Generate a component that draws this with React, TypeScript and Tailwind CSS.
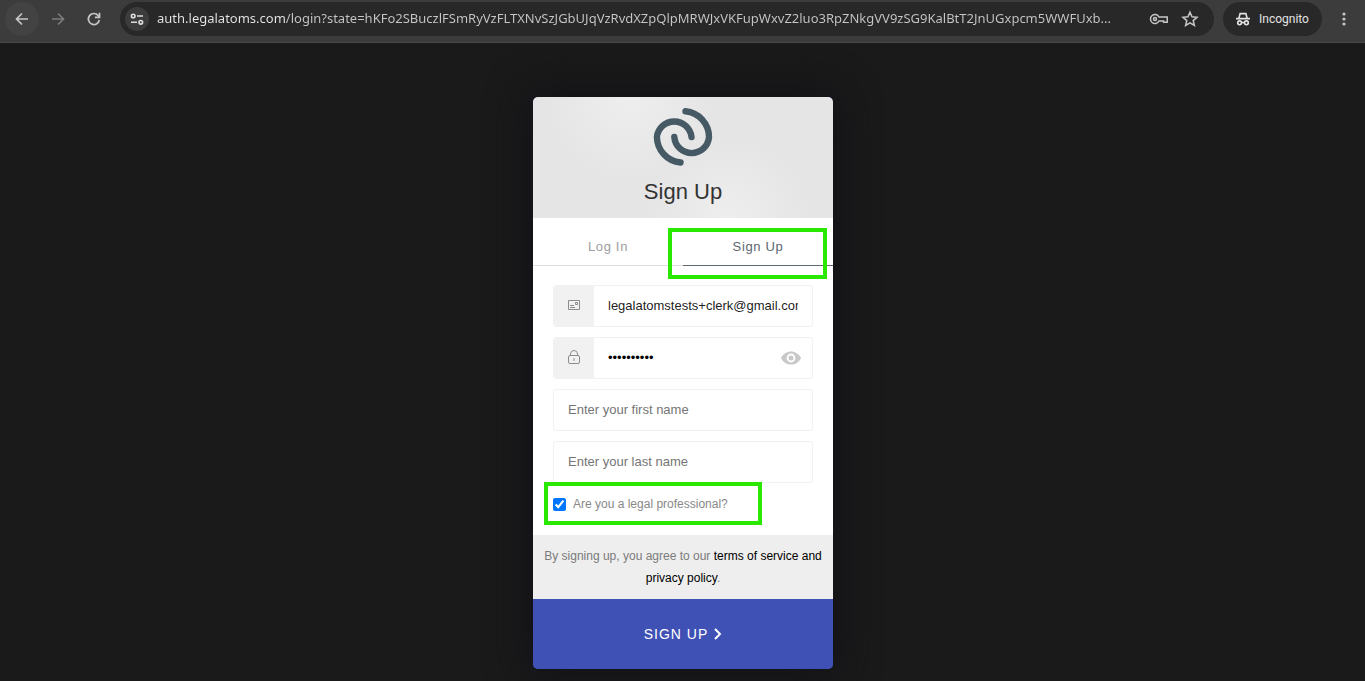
import React from 'react';

const ADDRESS =
  'auth.legalatoms.com/login?state=hKFo2SBuczlFSmRyVzFLTXNvSzJGbUJqVzRvdXZpQlpMRWJxVKFupWxvZ2luo3RpZNkgVV9zSG9KalBtT2JnUGxpcm5WWFUxb...';

/**
 * Browser toolbar with navigation, address field and incognito badge
 */
const BrowserBar: React.FC = () => {
  return (
    <header className="flex h-[43px] items-start border-b border-[#474847] bg-[#3c3c3c] pl-[5px] text-[#c7c7c7]">
      <nav className="flex h-[38px] shrink-0 items-center gap-0.5">
        <button type="button" aria-label="Back" className="flex size-[34px] items-center justify-center rounded-full bg-[#434343]">
          <svg width="16" height="16" viewBox="0 0 16 16" fill="none" stroke="currentColor" strokeWidth="1.7">
            <path d="M14 8H3M8 2.5 2.5 8 8 13.5" />
          </svg>
        </button>
        <button type="button" aria-label="Forward" className="flex size-[34px] items-center justify-center rounded-full text-[#7b7b7b]">
          <svg width="16" height="16" viewBox="0 0 16 16" fill="none" stroke="currentColor" strokeWidth="1.7">
            <path d="M2 8h11M8 2.5 13.5 8 8 13.5" />
          </svg>
        </button>
        <button type="button" aria-label="Reload" className="flex size-[34px] items-center justify-center rounded-full">
          <svg width="16" height="16" viewBox="0 0 16 16" fill="none" stroke="currentColor" strokeWidth="1.7">
            <path d="M13.3 9A5.5 5.5 0 1 1 12.2 4.6L13.4 6" />
            <path d="M13.5 1.8v4.6H8.9" />
          </svg>
        </button>
      </nav>

      <div className="mt-0.5 ml-[9px] flex h-[34px] min-w-0 flex-1 items-center rounded-full bg-[#282828] pr-[15px] pl-[5px]">
        <button type="button" aria-label="Site information" className="flex size-6 shrink-0 items-center justify-center rounded-full bg-[#3c3c3c] text-[#dedede]">
          <svg width="14" height="14" viewBox="0 0 14 14" fill="none" stroke="currentColor" strokeWidth="1.6">
            <circle cx="3.2" cy="4" r="1.8" />
            <path d="M7 4h6M1 10.3h6" />
            <circle cx="10.8" cy="10.3" r="1.8" />
          </svg>
        </button>
        <input
          type="text"
          aria-label="Address"
          defaultValue={ADDRESS}
          spellCheck={false}
          className="ml-2 min-w-0 flex-1 bg-linear-to-r from-[#e8e8e8] from-[128px] to-[#c7c7c7] to-[128px] bg-clip-text font-['Noto_Sans',sans-serif] text-[13px] text-transparent outline-none"
        />
        <button type="button" aria-label="Passwords" className="ml-2 shrink-0">
          <svg width="20" height="14" viewBox="0 0 20 14" fill="none" stroke="currentColor" strokeWidth="1.5">
            <path d="M10 5h8.2v5.2h-3.6V9H10A4.5 4.5 0 1 1 10 5Z" />
            <circle cx="6" cy="7" r="1.5" />
          </svg>
        </button>
        <button type="button" aria-label="Bookmark" className="ml-3 shrink-0">
          <svg width="18" height="18" viewBox="0 0 18 18" fill="none" stroke="currentColor" strokeWidth="1.5">
            <path d="m9 2.2 2 4.6 5 .5-3.8 3.3 1.2 4.9L9 12.9l-4.4 2.6 1.2-4.9L2 7.3l5-.5 2-4.6Z" />
          </svg>
        </button>
      </div>

      <button
        type="button"
        className="mt-0.5 ml-[9px] flex h-[34px] w-[99px] shrink-0 items-center gap-2 rounded-full bg-[#282828] pl-3 font-[Roboto,sans-serif] text-xs text-[#e3e3e3]"
      >
        <svg width="16" height="16" viewBox="0 0 16 16" fill="none" stroke="currentColor" strokeWidth="1.6">
          <path d="M1 7.6h14M3.9 7.2l1.2-4.6h5.8l1.2 4.6" />
          <circle cx="4.6" cy="11.8" r="1.9" />
          <circle cx="11.4" cy="11.8" r="1.9" />
          <path d="M6.5 11.5h3" />
        </svg>
        Incognito
      </button>
      <button type="button" aria-label="Menu" className="mt-0.5 flex h-[34px] w-[43px] shrink-0 items-center justify-center">
        <svg width="4" height="16" viewBox="0 0 4 16" fill="currentColor">
          <circle cx="2" cy="3" r="1.6" />
          <circle cx="2" cy="8" r="1.6" />
          <circle cx="2" cy="13" r="1.6" />
        </svg>
      </button>
    </header>
  );
};

const Logo: React.FC = () => (
  <svg width="60" height="60" viewBox="0 0 60 60" fill="none" stroke="#465a65" strokeWidth="6.4" strokeLinecap="round">
    <path d="M38.5 30A17.4 17.4 0 0 0 3.9 30A26 26 0 0 0 27.5 55.5" />
    <path d="M21.3 30A17.4 17.4 0 0 0 56 30A26 26 0 0 0 32.5 4.2" />
  </svg>
);

const fieldClass =
  'flex h-[42px] items-stretch overflow-hidden rounded-[3px] border border-[#f1f1f1] bg-white text-[13px]';

const fieldIconClass =
  'flex w-10 shrink-0 items-center justify-center bg-[#f1f1f1] pb-0.5 text-[#8c8c8c]';

/**
 * Sign up form
 */
const SignUpForm: React.FC = () => {
  return (
    <form className="w-[300px] overflow-hidden rounded-[5px] bg-[#3f51b5] shadow-[0_0_40px_4px_#111118]">
      <div className="flex h-[121px] flex-col items-center bg-[radial-gradient(circle_at_32%_0%,#eeeeee_0%,transparent_36%),radial-gradient(circle_at_65%_100%,#eeeeee_0%,transparent_36%)] bg-[#e5e5e5] pt-2.5">
        <Logo />
        <h1 className="mt-[9px] text-[22px] leading-8 text-[#333333]">Sign Up</h1>
      </div>

      <div className="relative flex bg-white pt-2.5 text-[13px] tracking-wider">
        <button type="button" className="h-[38px] flex-1 border-b border-[#dfdfdf] text-[#9b9ea3]">
          Log In
        </button>
        <button type="button" className="h-[38px] flex-1 border-b border-[#5c666f] text-[#5c666f]">
          Sign Up
        </button>
        <div className="pointer-events-none absolute top-2.5 right-1.5 h-[51px] w-[159px] border-4 border-[#2ae800]" />
      </div>

      <div className="flex flex-col gap-2.5 bg-white px-5 pt-[19px]">
        <div className={fieldClass}>
          <label htmlFor="email" aria-label="Email" className={fieldIconClass}>
            <svg width="12" height="10" viewBox="0 0 12 10" fill="none" stroke="currentColor">
              <path d="M.5.5h11v9H.5zM2 5.5h4M2 7.5h5M7.5 2.5h2v2h-2z" />
            </svg>
          </label>
          <input id="email" type="email" defaultValue="legalatomstests+clerk@gmail.com" className="mr-3.5 ml-3.5 min-w-0 flex-1 text-black/90 outline-none" />
        </div>

        <div className={fieldClass}>
          <label htmlFor="password" aria-label="Password" className={fieldIconClass}>
            <svg width="12" height="14" viewBox="0 0 12 14" fill="none" stroke="currentColor">
              <rect x=".5" y="5.5" width="11" height="8" rx="1.5" />
              <path d="M2.5 5.5V4a3.5 3.5 0 0 1 7 0v1.5M6 8v3" />
            </svg>
          </label>
          <input id="password" type="password" defaultValue="abcdefghij" className="ml-3.5 min-w-0 flex-1 text-black outline-none" />
          <button type="button" aria-label="Show password" className="mr-[11px] text-[#c8c8c8]">
            <svg width="20" height="14" viewBox="0 0 20 14">
              <path d="M0 7C4-1.8 16-1.8 20 7C16 15.8 4 15.8 0 7Z" fill="currentColor" />
              <circle cx="10" cy="7" r="4.4" fill="#ffffff" />
              <circle cx="10" cy="7" r="2.5" fill="currentColor" />
            </svg>
          </button>
        </div>

        <div className={fieldClass}>
          <input type="text" aria-label="First name" placeholder="Enter your first name" className="min-w-0 flex-1 px-3.5 placeholder-[#757575] outline-none" />
        </div>
        <div className={fieldClass}>
          <input type="text" aria-label="Last name" placeholder="Enter your last name" className="min-w-0 flex-1 px-3.5 placeholder-[#757575] outline-none" />
        </div>
      </div>

      <div className="relative flex h-[52px] items-center bg-white pb-2.5 pl-5">
        <input id="professional" type="checkbox" defaultChecked className="size-[13px] accent-[#0075ff]" />
        <label htmlFor="professional" className="pl-[7px] text-xs text-[#888888]">
          Are you a legal professional?
        </label>
        <div className="pointer-events-none absolute -top-px left-[11px] h-[43px] w-[218px] border-4 border-[#2ae800]" />
      </div>

      <p className="bg-[#eeeeee] px-2.5 py-2.5 text-center text-xs leading-[22px] text-[#7b7b7b]">
        By signing up, you agree to our{' '}
        <a href="#terms" className="text-black">
          terms of service and privacy policy
        </a>
        .
      </p>

      <button type="submit" className="flex h-[70px] w-full items-center justify-center gap-1.5 bg-[#3f51b5] text-sm tracking-[1px] text-white">
        SIGN UP
        <svg width="8" height="12" viewBox="0 0 8 12" fill="none" stroke="currentColor" strokeWidth="2">
          <path d="m1 1 5 5-5 5" />
        </svg>
      </button>
    </form>
  );
};

const App: React.FC = () => {
  return (
    <div className="flex min-h-screen flex-col bg-[#1a1a1a] font-['Liberation_Sans',Arial,sans-serif]">
      <BrowserBar />
      <main className="flex flex-1 justify-center pt-[54px] pb-3 pl-px">
        <SignUpForm />
      </main>
    </div>
  );
};

export default App;
